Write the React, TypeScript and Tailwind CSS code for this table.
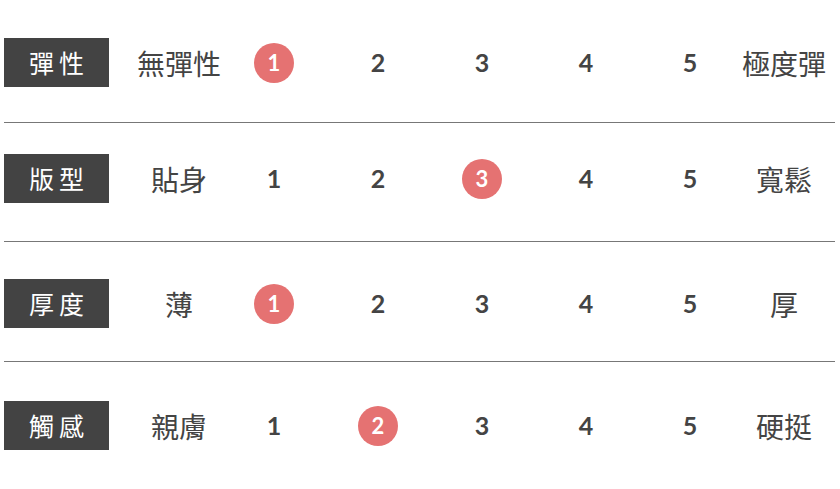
const rows = [
  { label: '彈性', left: '無彈性', right: '極度彈', pick: 1, pad: 'pt-[38px] pb-[35px]' },
  { label: '版型', left: '貼身', right: '寬鬆', pick: 3, pad: 'pt-[31px] pb-[38px]' },
  { label: '厚度', left: '薄', right: '厚', pick: 1, pad: 'pt-[37px] pb-[33px]' },
  { label: '觸感', left: '親膚', right: '硬挺', pick: 2, pad: 'pt-[39px] pb-[40px]' },
];

const cjk = "font-['Noto_Sans_CJK_TC','Noto_Sans_CJK_SC',sans-serif]";

export default function App() {
  return (
    <div className="w-[840px] h-[489px] overflow-hidden bg-white">
      {rows.map((row, i) => (
        <div key={row.label}>
          <div className={`flex items-center ${row.pad}`}>
            <div
              className={`ml-[4px] w-[105px] h-[49px] shrink-0 flex items-center justify-center bg-[#434343] text-white text-[25px] tracking-[5px] pl-[5px] ${cjk}`}
            >
              {row.label}
            </div>
            <div
              className={`w-[113px] shrink-0 pl-[27px] text-center whitespace-nowrap text-[#444] text-[28px] ${cjk}`}
            >
              {row.left}
            </div>
            {[1, 2, 3, 4, 5].map((n) => (
              <div key={n} className="w-[104px] shrink-0 flex items-center justify-center">
                {n === row.pick ? (
                  <span className="w-[40px] h-[40px] rounded-full bg-[#e57272] text-white flex items-center justify-center font-['Lato',sans-serif] font-bold text-[22px]">
                    {n}
                  </span>
                ) : (
                  <span className="w-[40px] h-[40px] flex items-center justify-center text-[#444] font-['Lato',sans-serif] font-bold text-[25px]">
                    {n}
                  </span>
                )}
              </div>
            ))}
            <div
              className={`w-[84px] shrink-0 flex justify-center whitespace-nowrap text-[#444] text-[28px] ${cjk}`}
            >
              {row.right}
            </div>
          </div>
          {i < rows.length - 1 && <div className="ml-[4px] w-[831px] h-px bg-[#777]" />}
        </div>
      ))}
    </div>
  );
}
